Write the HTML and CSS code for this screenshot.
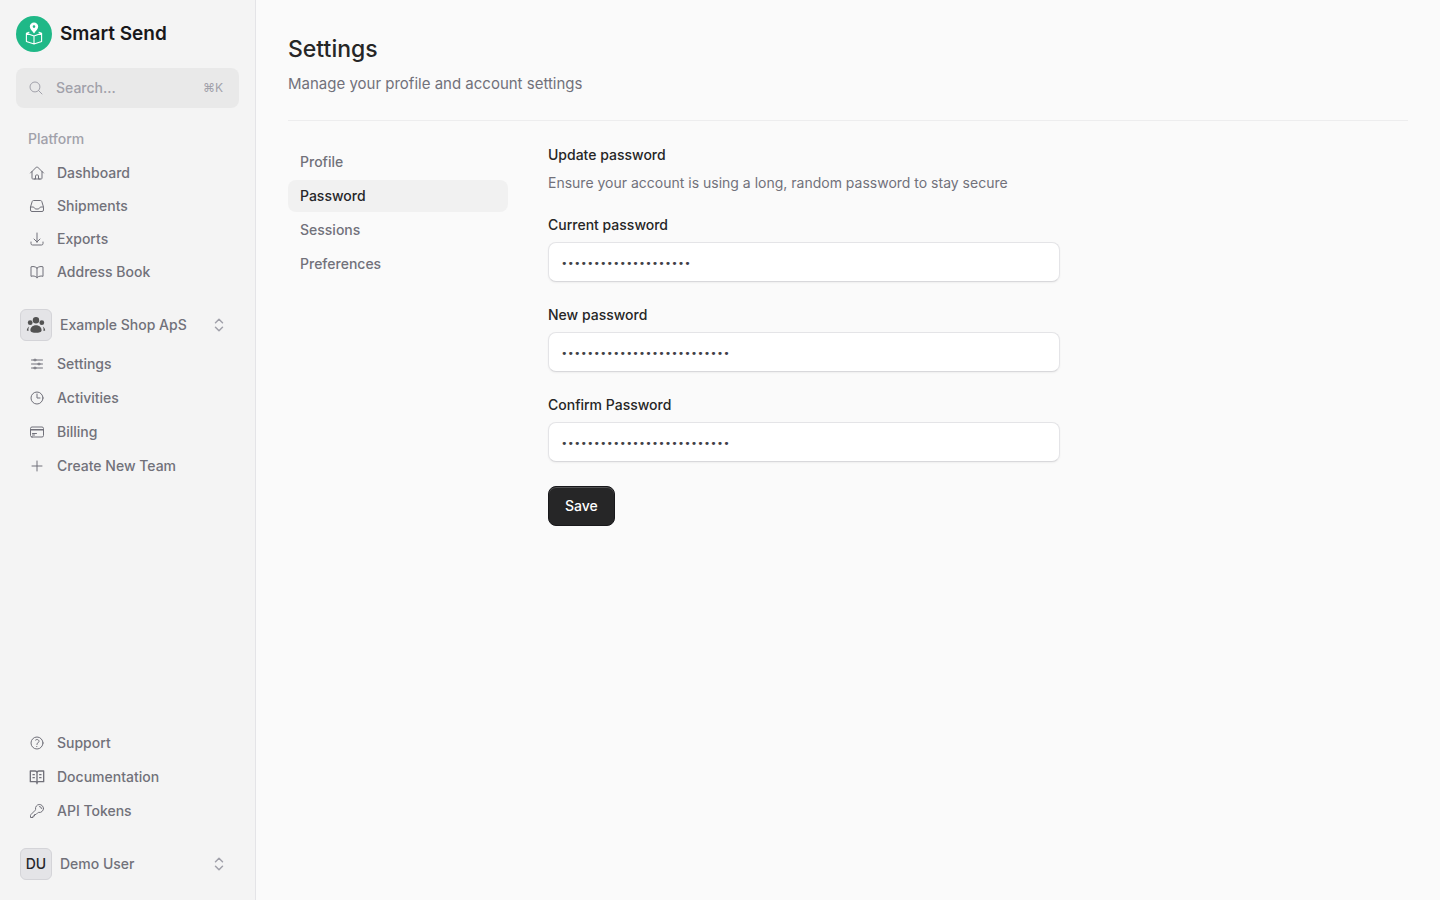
FILE: index.html
```html
<!DOCTYPE html>
<html lang="en">

<head>
  <meta charset="utf-8">
  <meta name="viewport" content="width=device-width, initial-scale=1">
  <title>Settings - Smart Send</title>
  <link rel="stylesheet" href="styles.css">
</head>

<body>
  <aside class="sidebar">
    <a class="brand" href="#">
      <svg class="brand-logo" viewBox="0 0 36 36">
        <circle cx="18" cy="18" r="18" fill="#1fb887" />
        <path fill="#fff" fill-rule="evenodd" d="M18 6.400a4.200 4.200 0 0 0-4.200 4.200c0 2.600 2.400 4.200 4.200 7 1.800-2.800 4.200-4.400 4.200-7A4.200 4.200 0 0 0 18 6.400zm0 2.900a1.300 1.300 0 1 1 0 2.600 1.300 1.300 0 0 1 0-2.600z" />
        <path fill="none" stroke="#fff" stroke-width="1.100" stroke-linejoin="round" stroke-linecap="round" d="M13 16.200l-2.600 1v8.200l7.600 2.600 7.600-2.600v-8.200l-2.600-1M10.400 17.200l7.600 2.800 7.600-2.800M18 20v8" />
      </svg>
      <span>Smart Send</span>
    </a>

    <label class="search">
      <svg class="icon" viewBox="0 0 24 24"><path d="m21 21-5.197-5.197m0 0A7.500 7.500 0 1 0 5.196 5.196a7.500 7.500 0 0 0 10.607 10.607Z" /></svg>
      <input type="text" placeholder="Search..." aria-label="Search">
      <kbd>⌘K</kbd>
    </label>

    <nav class="platform">
      <div class="nav-heading">Platform</div>
      <a class="nav-item" href="#">
        <svg class="icon" viewBox="0 0 24 24"><path d="m2.250 12 8.954-8.955c.440-.439 1.152-.439 1.591 0L21.750 12M4.500 9.750v10.125c0 .621.504 1.125 1.125 1.125H9.750v-4.875c0-.621.504-1.125 1.125-1.125h2.250c.621 0 1.125.504 1.125 1.125V21h4.125c.621 0 1.125-.504 1.125-1.125V9.750M8.250 21h8.250" /></svg>
        Dashboard
      </a>
      <a class="nav-item" href="#">
        <svg class="icon" viewBox="0 0 24 24"><path d="M2.250 13.500h3.860a2.250 2.250 0 0 1 2.012 1.244l.256.512a2.250 2.250 0 0 0 2.013 1.244h3.218a2.250 2.250 0 0 0 2.013-1.244l.256-.512a2.250 2.250 0 0 1 2.013-1.244h3.859m-19.500.338V18a2.250 2.250 0 0 0 2.250 2.250h15A2.250 2.250 0 0 0 21.750 18v-4.162c0-.224-.034-.447-.1-.661L19.240 5.338a2.250 2.250 0 0 0-2.150-1.588H6.911a2.250 2.250 0 0 0-2.150 1.588L2.350 13.177a2.250 2.250 0 0 0-.1.661Z" /></svg>
        Shipments
      </a>
      <a class="nav-item" href="#">
        <svg class="icon" viewBox="0 0 24 24"><path d="M3 16.500v2.250A2.250 2.250 0 0 0 5.250 21h13.500A2.250 2.250 0 0 0 21 18.750V16.500M16.500 12 12 16.500m0 0L7.500 12m4.500 4.500V3" /></svg>
        Exports
      </a>
      <a class="nav-item" href="#">
        <svg class="icon" viewBox="0 0 24 24"><path d="M12 6.042A8.967 8.967 0 0 0 6 3.750c-1.052 0-2.062.180-3 .512v14.250A8.987 8.987 0 0 1 6 18c2.305 0 4.408.867 6 2.292m0-14.250a8.966 8.966 0 0 1 6-2.292c1.052 0 2.062.180 3 .512v14.250A8.987 8.987 0 0 0 18 18a8.967 8.967 0 0 0-6 2.292m0-14.250v14.250" /></svg>
        Address Book
      </a>
    </nav>

    <button class="profile" type="button">
      <span class="avatar">
        <svg class="team-icon" viewBox="0 0 20 20">
          <circle cx="10" cy="5.300" r="3.200" />
          <circle cx="4.200" cy="7.700" r="2.400" />
          <circle cx="15.800" cy="7.700" r="2.400" />
          <path d="M10 10.200c3.300 0 5.600 2.300 5.600 5 0 1.900-2.800 2.600-5.600 2.600s-5.600-.7-5.600-2.600c0-2.700 2.300-5 5.600-5z" />
          <path d="M3.200 11.400c-1.400.8-2.300 2.200-2.400 4.100l1.700.5c-.1-1.900-.1-3.200.7-4.600zM16.800 11.400c1.400.8 2.300 2.200 2.400 4.100l-1.700.5c.1-1.900.1-3.200-.7-4.600z" />
        </svg>
      </span>
      <span class="profile-name">Example Shop ApS</span>
      <svg class="chevrons" viewBox="0 0 16 16"><path d="M4.500 5.800 8 2.300l3.500 3.500M4.500 10.200 8 13.700l3.500-3.500" /></svg>
    </button>

    <nav class="nav">
      <a class="nav-item" href="#">
        <svg class="icon" viewBox="0 0 24 24"><path d="M10.500 6h9.750M10.500 6a1.500 1.500 0 1 1-3 0m3 0a1.500 1.500 0 1 0-3 0M3.750 6H7.500m3 12h9.750m-9.750 0a1.500 1.500 0 0 1-3 0m3 0a1.500 1.500 0 0 0-3 0m-3.750 0H7.500m9-6h3.750m-3.750 0a1.500 1.500 0 0 1-3 0m3 0a1.500 1.500 0 0 0-3 0m-9.750 0h9.750" /></svg>
        Settings
      </a>
      <a class="nav-item" href="#">
        <svg class="icon" viewBox="0 0 24 24"><path d="M12 6v6h4.500m4.500 0a9 9 0 1 1-18 0 9 9 0 0 1 18 0Z" /></svg>
        Activities
      </a>
      <a class="nav-item" href="#">
        <svg class="icon" viewBox="0 0 24 24"><path d="M2.250 8.250h19.500M2.250 9h19.500m-16.500 5.250h6m-6 2.250h3m-3.750 3h15a2.250 2.250 0 0 0 2.250-2.250V6.750A2.250 2.250 0 0 0 19.500 4.500h-15a2.250 2.250 0 0 0-2.250 2.250v10.500A2.250 2.250 0 0 0 4.500 19.500Z" /></svg>
        Billing
      </a>
      <a class="nav-item" href="#">
        <svg class="icon" viewBox="0 0 24 24"><path d="M12 4.500v15m7.500-7.500h-15" /></svg>
        Create New Team
      </a>
    </nav>

    <nav class="nav nav-bottom">
      <a class="nav-item" href="#">
        <svg class="icon" viewBox="0 0 24 24"><path d="M9.879 7.519c1.171-1.025 3.071-1.025 4.242 0 1.172 1.025 1.172 2.687 0 3.712-.203.179-.430.326-.670.442-.745.361-1.450.999-1.450 1.827v.750M21 12a9 9 0 1 1-18 0 9 9 0 0 1 18 0Zm-9 5.250h.008v.008H12v-.008Z" /></svg>
        Support
      </a>
      <a class="nav-item" href="#">
        <svg class="icon icon-bold" viewBox="0 0 24 24"><path d="M12 6v16M2 3h7a3 3 0 0 1 3 3 3 3 0 0 1 3-3h7v16h-7.500a2.500 2.500 0 0 0-2.500 2 2.500 2.500 0 0 0-2.500-2H2ZM6 8.500h2M6 13h2M16 8.500h2M16 13h2" /></svg>
        Documentation
      </a>
      <a class="nav-item" href="#">
        <svg class="icon" viewBox="0 0 24 24"><path d="M15.750 5.250a3 3 0 0 1 3 3m3 0a6 6 0 0 1-7.029 5.912c-.563-.097-1.159.026-1.563.430L10.500 17.250H8.250v2.250H6v2.250H2.250v-2.818c0-.597.237-1.170.659-1.591l6.499-6.499c.404-.404.527-1 .430-1.563A6 6 0 1 1 21.750 8.250Z" /></svg>
        API Tokens
      </a>
    </nav>

    <button class="profile" type="button">
      <span class="avatar">DU</span>
      <span class="profile-name">Demo User</span>
      <svg class="chevrons" viewBox="0 0 16 16"><path d="M4.500 5.800 8 2.300l3.500 3.500M4.500 10.200 8 13.700l3.500-3.500" /></svg>
    </button>
  </aside>

  <main class="main">
    <header class="page-header">
      <h1>Settings</h1>
      <p>Manage your profile and account settings</p>
    </header>

    <div class="settings">
      <nav class="settings-nav">
        <a href="#">Profile</a>
        <a class="current" href="#">Password</a>
        <a href="#">Sessions</a>
        <a href="#">Preferences</a>
      </nav>

      <section class="settings-content">
        <h2>Update password</h2>
        <p>Ensure your account is using a long, random password to stay secure</p>

        <form class="form" action="">
          <div class="field">
            <label for="current_password">Current password</label>
            <input id="current_password" type="password" value="current-password-123">
          </div>
          <div class="field">
            <label for="password">New password</label>
            <input id="password" type="password" value="new-secure-password-123456">
          </div>
          <div class="field">
            <label for="password_confirmation">Confirm Password</label>
            <input id="password_confirmation" type="password" value="new-secure-password-123456">
          </div>
          <button class="save" type="submit">Save</button>
        </form>
      </section>
    </div>
  </main>
</body>

</html>
```
FILE: styles.css
```css
* {
  box-sizing: border-box;
}

body {
  margin: 0;
  min-height: 100vh;
  display: flex;
  background: #fafafa;
  color: #262626;
  font-family: Inter, "Noto Sans", sans-serif;
  font-size: 14px;
  line-height: 20px;
  -webkit-font-smoothing: antialiased;
}

a {
  color: inherit;
  text-decoration: none;
}

h1, h2, p {
  margin: 0;
}

button, input, kbd {
  font: inherit;
}

.sidebar {
  width: 256px;
  flex-shrink: 0;
  display: flex;
  flex-direction: column;
  padding: 16px;
  background: #f4f4f4;
  border-right: 1px solid #e4e4e7;
}

.brand {
  display: flex;
  align-items: center;
  gap: 8px;
  color: #18181b;
  font-size: 19px;
  font-weight: 600;
}

.brand-logo {
  width: 36px;
  height: 36px;
}

.search {
  display: flex;
  align-items: center;
  height: 40px;
  margin-top: 16px;
  padding: 0 16px 0 12px;
  border-radius: 8px;
  background: #e9e9e9;
  color: #a1a1aa;
}

.search input {
  flex: 1;
  min-width: 0;
  margin-left: 12px;
  padding: 0;
  border: none;
  outline: none;
  background: none;
  font-weight: 500;
}

.search input::placeholder {
  color: #a1a1aa;
}

.search kbd {
  font-size: 12px;
}

.icon {
  width: 16px;
  height: 16px;
  flex-shrink: 0;
  fill: none;
  stroke: currentColor;
  stroke-width: 1.5;
  stroke-linecap: round;
  stroke-linejoin: round;
}

.icon-bold {
  stroke-width: 2;
}

.platform {
  display: flex;
  flex-direction: column;
  gap: 1px;
  margin: 21px 0 17px;
}

.nav-heading {
  padding: 0 12px 7px;
  color: #a1a1aa;
  font-weight: 500;
}

.nav {
  display: flex;
  flex-direction: column;
  gap: 2px;
  margin-top: 3px;
}

.nav-bottom {
  margin-top: auto;
  margin-bottom: 17px;
}

.nav-item {
  display: flex;
  align-items: center;
  gap: 12px;
  height: 32px;
  padding: 0 13px;
  border-radius: 8px;
  color: #71717a;
  font-weight: 500;
}

.profile {
  display: flex;
  align-items: center;
  gap: 8px;
  height: 40px;
  padding: 4px 12px 4px 4px;
  border: none;
  border-radius: 8px;
  background: none;
  color: #71717a;
  font-weight: 500;
  text-align: left;
}

.profile-name {
  flex: 1;
}

.avatar {
  display: flex;
  align-items: center;
  justify-content: center;
  width: 32px;
  height: 32px;
  border: 1px solid #d4d4d8;
  border-radius: 6px;
  background: #e4e4e7;
  color: #27272a;
}

.team-icon {
  width: 20px;
  height: 20px;
  fill: #525252;
}

.chevrons {
  width: 16px;
  height: 16px;
  fill: none;
  stroke: #a1a1aa;
  stroke-width: 1.5;
  stroke-linecap: round;
  stroke-linejoin: round;
}

.main {
  flex: 1;
  min-width: 0;
  padding: 32px;
}

.page-header {
  padding-bottom: 24px;
  border-bottom: 1px solid #ededee;
}

.page-header h1 {
  font-size: 23px;
  font-weight: 500;
  line-height: 34px;
}

.page-header p {
  margin-top: 6px;
  color: #71717a;
  font-size: 15px;
  line-height: 24px;
}

.settings {
  display: flex;
  align-items: flex-start;
  gap: 40px;
  margin-top: 24px;
}

.settings-nav {
  display: flex;
  flex-direction: column;
  gap: 2px;
  width: 220px;
  flex-shrink: 0;
  padding-top: 1px;
}

.settings-nav a {
  padding: 6px 12px;
  border-radius: 8px;
  color: #71717a;
  font-weight: 500;
}

.settings-nav .current {
  background: #f1f1f1;
  color: #27272a;
}

.settings-content {
  flex: 1;
  max-width: 512px;
}

.settings-content h2 {
  font-size: 14px;
  font-weight: 500;
}

.settings-content p {
  margin-top: 8px;
  color: #71717a;
}

.form {
  display: flex;
  flex-direction: column;
  align-items: flex-start;
  gap: 24px;
  margin-top: 23px;
}

.field {
  display: flex;
  flex-direction: column;
  gap: 8px;
  width: 100%;
}

.field label {
  font-weight: 500;
  line-height: 18px;
}

.field input {
  width: 100%;
  height: 40px;
  padding: 2px 12px 0;
  border: 1px solid #e4e4e7;
  border-bottom-color: #d8d8db;
  border-radius: 8px;
  background: #fff;
  color: #3f3f46;
  font-family: "DejaVu Sans", sans-serif;
  font-size: 11px;
  box-shadow: 0 1px 2px rgba(0, 0, 0, 0.05);
}

.save {
  height: 40px;
  padding: 0 16px;
  border: 1px solid #18181b;
  border-radius: 8px;
  background: #262627;
  color: #fff;
  font-weight: 500;
  box-shadow: inset 0 1px rgba(255, 255, 255, 0.2);
}
```
